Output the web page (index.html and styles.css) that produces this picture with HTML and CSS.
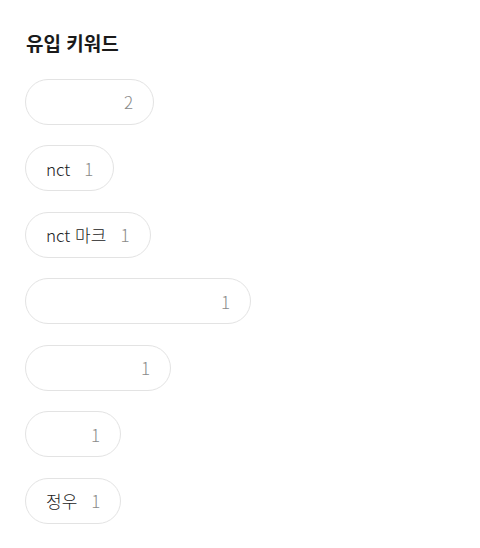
FILE: index.html
```html
<!DOCTYPE html>
<html lang="ko">
<head>
<meta charset="utf-8">
<link rel="stylesheet" href="styles.css">
</head>
<body>
<section class="panel">
  <h2 class="title">유입 키워드</h2>
  <ul class="list">
    <li class="pill"><span class="kw blank" style="width:64px"></span><span class="count">2</span></li>
    <li class="pill"><span class="kw">nct</span><span class="count">1</span></li>
    <li class="pill"><span class="kw">nct 마크</span><span class="count">1</span></li>
    <li class="pill"><span class="kw blank" style="width:161px"></span><span class="count">1</span></li>
    <li class="pill"><span class="kw blank" style="width:81px"></span><span class="count">1</span></li>
    <li class="pill"><span class="kw blank" style="width:31px"></span><span class="count">1</span></li>
    <li class="pill"><span class="kw">정우</span><span class="count">1</span></li>
  </ul>
</section>
</body>
</html>
```
FILE: styles.css
```css
html, body {
  margin: 0;
  padding: 0;
  background: #ffffff;
}
body {
  font-family: "Noto Sans CJK KR", "Noto Sans", sans-serif;
  color: #222222;
}
.panel {
  padding: 28px 25px 0 25px;
}
.title {
  margin: 0 0 20.5px 1px;
  font-size: 19px;
  font-weight: 700;
  line-height: 30px;
  color: #1a1a1a;
}
.list {
  list-style: none;
  margin: 0;
  padding: 0;
  display: flex;
  flex-direction: column;
  align-items: flex-start;
  gap: 20.5px;
}
.pill {
  display: flex;
  align-items: center;
  gap: 14px;
  height: 44px;
  padding: 0 20px;
  border: 1px solid #e3e3e3;
  border-radius: 23px;
  box-sizing: content-box;
  font-size: 17px;
  font-weight: 300;
}
.kw {
  color: #222222;
  white-space: nowrap;
}
.blank {
  display: inline-block;
  height: 20px;
}
.count {
  color: #8a8a8a;
}
```
